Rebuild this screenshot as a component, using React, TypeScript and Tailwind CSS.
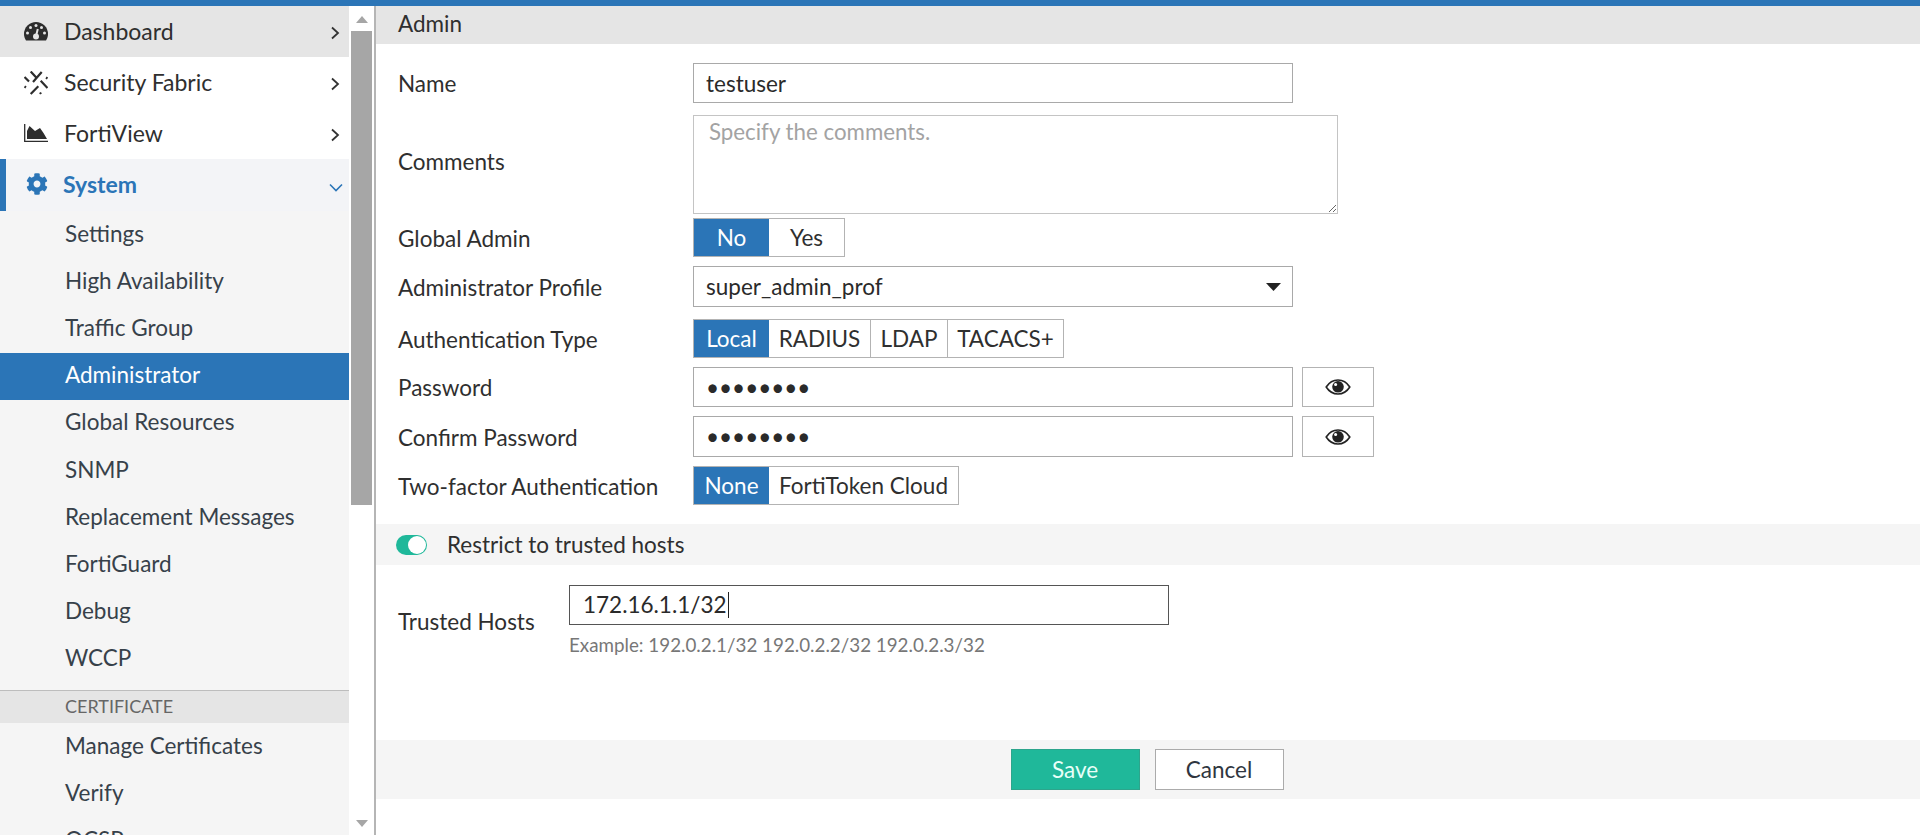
import { FaCog } from 'react-icons/fa';

const subItems = ['Settings', 'High Availability', 'Traffic Group', 'Administrator', 'Global Resources', 'SNMP', 'Replacement Messages', 'FortiGuard', 'Debug', 'WCCP'];
const certItems = ['Manage Certificates', 'Verify', 'OCSP'];

function Chevron() {
  return (
    <svg width="10" height="14" viewBox="0 0 10 14" className="ml-auto mr-[9px] mt-[3px]" fill="none" stroke="#333" strokeWidth="1.8">
      <path d="M2 1.5 8 7 2 12.5" />
    </svg>
  );
}

function GaugeIcon() {
  return (
    <svg width="24" height="19" viewBox="0 0 24 19">
      <path d="M12 0A12 12 0 0 1 24 12c0 2.500-.8 4.800-2 6.500H2C.8 16.800 0 14.500 0 12A12 12 0 0 1 12 0z" fill="#2d2d2d" />
      <g fill="#e5e5e5">
        <circle cx="12" cy="3.500" r="1.500" />
        <circle cx="6.500" cy="5.500" r="1.500" />
        <circle cx="17.500" cy="5.500" r="1.500" />
        <circle cx="3.500" cy="11" r="1.500" />
        <circle cx="20.500" cy="11" r="1.500" />
        <circle cx="12" cy="14.500" r="3" />
      </g>
      <path d="M12 14 13.800 7" stroke="#e5e5e5" strokeWidth="2" />
    </svg>
  );
}

function FabricIcon() {
  return (
    <svg width="24" height="24" viewBox="0 0 24 24" fill="none" stroke="#2d2d2d" strokeWidth="2.2">
      <path d="M6.700.5 12 6.300M17.700 1 9 11M.5 6 5 10.500M16.700 9.700 23.500 17M6.700 23 14.300 15.300" />
      <path d="M22 6.500l1.500 1M.5 15.500l1.500 1M16 21.500l1 1.500" />
    </svg>
  );
}

function AreaIcon() {
  return (
    <svg width="24" height="18" viewBox="0 0 24 18" className="mb-[2px]">
      <path d="M.7 0V17.300H24" fill="none" stroke="#2d2d2d" strokeWidth="1.300" />
      <path d="M3 15V7L5.500 2 11 7l5-3 3.500 5L23 15z" fill="#2d2d2d" />
    </svg>
  );
}

function Eye() {
  return (
    <svg width="26" height="18" viewBox="0 0 26 18">
      <path d="M1.200 9C4 4.600 8.200 2 13 2s9 2.600 11.800 7c-2.800 4.400-7 7-11.800 7S4 13.400 1.200 9z" fill="none" stroke="#222" strokeWidth="1.600" />
      <circle cx="13" cy="8.800" r="5.800" fill="#222" />
      <circle cx="10.600" cy="6.400" r="1.500" fill="#fff" />
    </svg>
  );
}

function NavItem({ label, icon, active }: { label: string; icon: React.ReactNode; active?: boolean }) {
  return (
    <div className={`h-[51px] flex items-center pl-6 text-[23px] text-[#2f2f2f] ${active ? 'bg-[#e5e5e5]' : 'bg-white'}`}>
      <span className="w-6 flex justify-center">{icon}</span>
      <span className="ml-[16px]">{label}</span>
      <Chevron />
    </div>
  );
}

function Segments({ items, widths }: { items: string[]; widths: string[] }) {
  return (
    <div className="flex h-[39px] border border-[#b3b3b3] text-[22.5px] text-[#2f2f2f]">
      {items.map((t, i) => (
        <div key={t} className={`${widths[i]} flex items-center justify-center ${i === 0 ? 'bg-[#2b75b7] text-white' : i > 1 ? 'border-l border-[#b3b3b3]' : ''}`}>
          {t}
        </div>
      ))}
    </div>
  );
}

function Row({ label, className, labelClass = 'pt-[2px]', children }: { label: string; className: string; labelClass?: string; children: React.ReactNode }) {
  return (
    <div className={`flex items-center pl-[22px] ${className}`}>
      <div className={`w-[295px] text-[22.5px] text-[#2f2f2f] shrink-0 ${labelClass}`}>{label}</div>
      {children}
    </div>
  );
}

const field = 'w-[600px] h-full border border-[#a9a9a9] px-[12px] text-[22.5px] text-[#2a2a2a] outline-none bg-white';

export default function App() {
  return (
    <div className="h-[835px] overflow-hidden bg-white flex flex-col font-['Lato',sans-serif]">
      <div className="h-[6px] bg-[#2b75b7] shrink-0" />
      <div className="flex flex-1 min-h-0">
        <aside className="w-[349px] shrink-0 h-full overflow-hidden">
          <NavItem label="Dashboard" active icon={<GaugeIcon />} />
          <NavItem label="Security Fabric" icon={<FabricIcon />} />
          <NavItem label="FortiView" icon={<AreaIcon />} />
          <div className="h-[52px] flex items-center pl-[19px] border-l-[6px] border-[#2b75b7] bg-[#f3f4f7] text-[23px] font-bold text-[#2b75b7]">
            <span className="w-6 flex justify-center pb-[2px]"><FaCog size={22} /></span>
            <span className="ml-[14px] pb-[2px]">System</span>
            <svg width="14" height="9" viewBox="0 0 14 9" className="ml-auto mr-[6px] mt-[4px]" fill="none" stroke="#2b75b7" strokeWidth="1.600"><path d="M1 1.500 7 7.500 13 1.500" /></svg>
          </div>
          <div className="bg-[#f5f5f5] pb-[7px]">
            {subItems.map((s) => (
              <div key={s} className={`h-[47.2px] flex items-center pl-[65px] pb-[2px] text-[22.5px] ${s === 'Administrator' ? 'bg-[#2b75b7] text-white' : 'text-[#37414a]'}`}>{s}</div>
            ))}
          </div>
          <div className="h-[33px] flex items-center pl-[65px] pb-[1px] bg-[#e5e5e5] border-t border-[#bdbdbd] text-[18px] text-[#666]">CERTIFICATE</div>
          <div className="bg-[#f5f5f5]">
            {certItems.map((s) => (
              <div key={s} className="h-[47.2px] flex items-center pl-[65px] pb-[2px] text-[22.5px] text-[#37414a]">{s}</div>
            ))}
          </div>
        </aside>
        <div className="w-[25px] shrink-0 flex flex-col items-center bg-white">
          <svg width="12" height="7" viewBox="0 0 12 7" className="mt-[10px] mb-[8px]"><path d="M6 0 12 7H0z" fill="#a6a6a6" /></svg>
          <div className="w-[21px] h-[474px] bg-[#a6a6a6]" />
          <svg width="12" height="7" viewBox="0 0 12 7" className="mt-auto mb-[8px]"><path d="M6 7 12 0H0z" fill="#a6a6a6" /></svg>
        </div>
        <main className="flex-1 min-w-0 border-l-2 border-[#b5b5b5] flex flex-col">
          <div className="h-[38px] shrink-0 bg-[#e5e5e5] pl-[22px] flex items-center pb-[2px] text-[22.5px] text-[#2f2f2f]">Admin</div>
          <Row label="Name" className="h-[40px] mt-[19px]">
            <input readOnly value="testuser" className={field} />
          </Row>
          <Row label="Comments" labelClass="pb-[6px]" className="h-[99px] mt-[12px]">
            <textarea readOnly placeholder="Specify the comments." className="w-[645px] h-full border border-[#c4c4c4] px-[15px] py-0 text-[22.3px] leading-[32px] outline-none placeholder:text-[#a3a3a3] resize-y" />
          </Row>
          <Row label="Global Admin" className="h-[39px] mt-[4px]">
            <Segments items={['No', 'Yes']} widths={['w-[75px]', 'w-[75px]']} />
          </Row>
          <Row label="Administrator Profile" className="h-[41px] mt-[9px]">
            <div className="w-[600px] h-full border border-[#a9a9a9] pl-[12px] pr-[11px] flex items-center text-[22.5px] text-[#2a2a2a]">
              super_admin_prof
              <svg width="15" height="8" viewBox="0 0 15 8" className="ml-auto"><path d="M0 0h15L7.500 8z" fill="#222" /></svg>
            </div>
          </Row>
          <Row label="Authentication Type" className="h-[39px] mt-[12px]">
            <Segments items={['Local', 'RADIUS', 'LDAP', 'TACACS+']} widths={['w-[75px]', 'w-[101px]', 'w-[77px]', 'w-[116px]']} />
          </Row>
          <Row label="Password" labelClass="pt-[1px]" className="h-[40px] mt-[9px]">
            <input readOnly type="password" value="password" className={field} />
            <div className="w-[72px] h-full ml-[9px] border border-[#b3b3b3] flex items-center justify-center"><Eye /></div>
          </Row>
          <Row label="Confirm Password" className="h-[41px] mt-[9px]">
            <input readOnly type="password" value="password" className={field} />
            <div className="w-[72px] h-full ml-[9px] border border-[#b3b3b3] flex items-center justify-center"><Eye /></div>
          </Row>
          <Row label="Two-factor Authentication" className="h-[39px] mt-[9px]">
            <Segments items={['None', 'FortiToken Cloud']} widths={['w-[75px]', 'w-[189px]']} />
          </Row>
          <div className="h-[41px] mt-[19px] bg-[#f5f5f5] pl-[20px] flex items-center text-[22.5px] text-[#2f2f2f]">
            <div className="w-[31px] h-[20px] rounded-full bg-[#1fb89a] flex items-center justify-end pr-[1px]">
              <div className="w-[18px] h-[18px] rounded-full bg-white" />
            </div>
            <span className="ml-[20px]">Restrict to trusted hosts</span>
          </div>
          <div className="flex items-center pl-[22px] h-[40px] mt-[20px]">
            <div className="w-[171px] shrink-0 text-[22.5px] text-[#2f2f2f] pt-[33px]">Trusted Hosts</div>
            <div className="w-[600px] h-full border border-[#555] px-[13px] flex items-center text-[22.5px] text-[#2a2a2a]">
              172.16.1.1/32
              <span className="w-px h-[26px] ml-px bg-[#222]" />
            </div>
          </div>
          <div className="pl-[193px] mt-[8px] h-[24px] leading-[24px] text-[18.8px] text-[#777]">Example: 192.0.2.1/32 192.0.2.2/32 192.0.2.3/32</div>
          <div className="h-[59px] mt-[83px] pr-[2px] bg-[#f5f5f5] flex items-center justify-center gap-[15px] text-[22.5px]">
            <div className="w-[129px] h-[41px] bg-[#1fb89a] border border-[#2da58c] text-[#e8fff8] flex items-center justify-center">Save</div>
            <div className="w-[129px] h-[41px] bg-white border border-[#ababab] text-[#2f3640] flex items-center justify-center">Cancel</div>
          </div>
        </main>
      </div>
    </div>
  );
}
